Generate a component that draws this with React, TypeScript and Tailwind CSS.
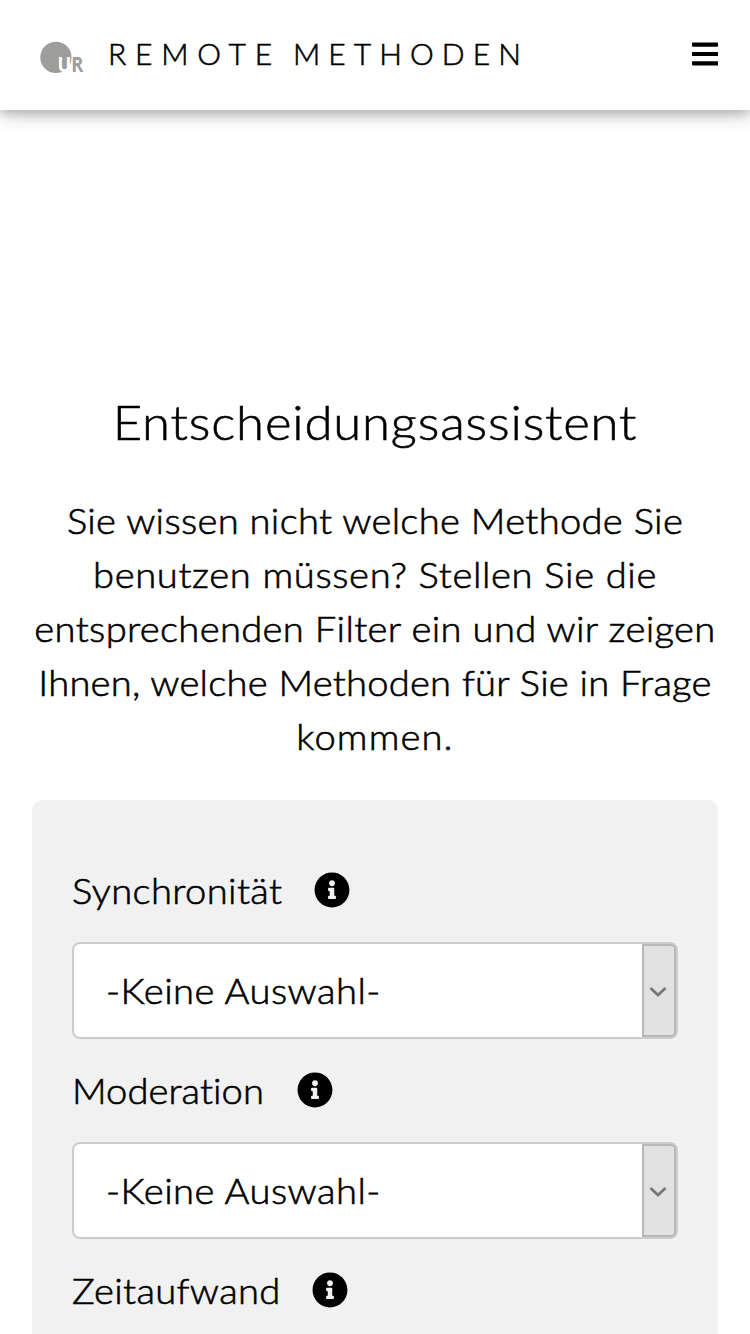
import { FaBars, FaInfoCircle } from "react-icons/fa";

const paragraph = [
  { text: "Sie wissen nicht welche Methode Sie", spacing: "tracking-[0.28px]" },
  { text: "benutzen müssen? Stellen Sie die", spacing: "tracking-[0.6px]" },
  { text: "entsprechenden Filter ein und wir zeigen", spacing: "tracking-[0.32px]" },
  { text: "Ihnen, welche Methoden für Sie in Frage", spacing: "tracking-[0.21px]" },
  { text: "kommen.", spacing: "tracking-[1.05px]" },
];

const filters = [
  { label: "Synchronität", spacing: "tracking-[0.34px]" },
  { label: "Moderation", spacing: "tracking-[0.05px]" },
  { label: "Zeitaufwand", spacing: "tracking-[0.3px]" },
];

function Logo() {
  return (
    <svg className="h-[34px] w-11 shrink-0 [-webkit-text-stroke:0]" viewBox="0 0 44 34">
      <circle cx="15.9" cy="16.4" r="15.6" fill="#9d9d9c" />
      <text
        x="17.5"
        y="31"
        textLength="26"
        lengthAdjust="spacingAndGlyphs"
        fontFamily="Open Sans, sans-serif"
        fontWeight="700"
        fontSize="20.5"
        fill="#9d9d9c"
      >
        <tspan fill="#fff">U</tspan>R
      </text>
    </svg>
  );
}

function Select() {
  return (
    <div className="flex h-[97px] items-center justify-between rounded-lg border-2 border-[#ccc] bg-white pl-8 text-[36px]">
      <span className="origin-left scale-x-[1.06] pb-0.5 tracking-[0.44px]">-Keine Auswahl-</span>
      <div className="flex h-full w-[34px] items-center justify-center rounded-r-[5px] border-2 border-[#b7b7b7] bg-[#e1e1e1] pr-0.5 pt-0.5">
        <svg viewBox="0 0 18 12" className="h-3 w-[18px]">
          <path d="M1.500 2 9 9 16.500 2" fill="none" stroke="#787878" strokeWidth="2.8" />
        </svg>
      </div>
    </div>
  );
}

export default function App() {
  return (
    <div className="h-[1334px] overflow-hidden bg-white font-['Lato',sans-serif] font-light text-black [-webkit-text-stroke:0.6px_black]">
      <header className="flex h-[110px] items-start justify-between pl-10 pr-8 shadow-[0_4px_10px_rgba(0,0,0,0.2),0_4px_20px_rgba(0,0,0,0.19)]">
        <div className="flex pt-[41px]">
          <Logo />
          <h1 className="ml-6 -mt-2 flex gap-3 text-[30px] leading-10 font-light whitespace-nowrap">
            <span className="tracking-[8.8px]">REMOTE</span>
            <span className="tracking-[8.1px]">METHODEN</span>
          </h1>
        </div>
        <FaBars className="mt-[38.5px] h-[30px] w-[26.25px]" />
      </header>
      <main className="px-8 pt-[270px]">
        <h2 className="scale-x-[1.06] text-center text-[48px] leading-[84px] font-light tracking-[0.78px]">
          Entscheidungsassistent
        </h2>
        <p className="pt-[29px] text-center text-[36px] leading-[54px]">
          {paragraph.map((line) => (
            <span key={line.text} className="block scale-x-[1.06] whitespace-nowrap">
              <span className={line.spacing}>{line.text}</span>
            </span>
          ))}
        </p>
        <section className="mt-[37px] h-[560px] rounded-[10px] bg-[#f1f1f1] px-10 pt-10">
          {filters.map((filter) => (
            <div key={filter.label} className="h-[200px]">
              <div className="flex h-[102px] items-center pb-[3px] text-[36px]">
                <span className="origin-left scale-x-[1.06]">
                  <span className={filter.spacing}>{filter.label}</span>
                </span>
                <FaInfoCircle className="mt-px ml-[43.5px]" />
              </div>
              <Select />
            </div>
          ))}
        </section>
      </main>
    </div>
  );
}
